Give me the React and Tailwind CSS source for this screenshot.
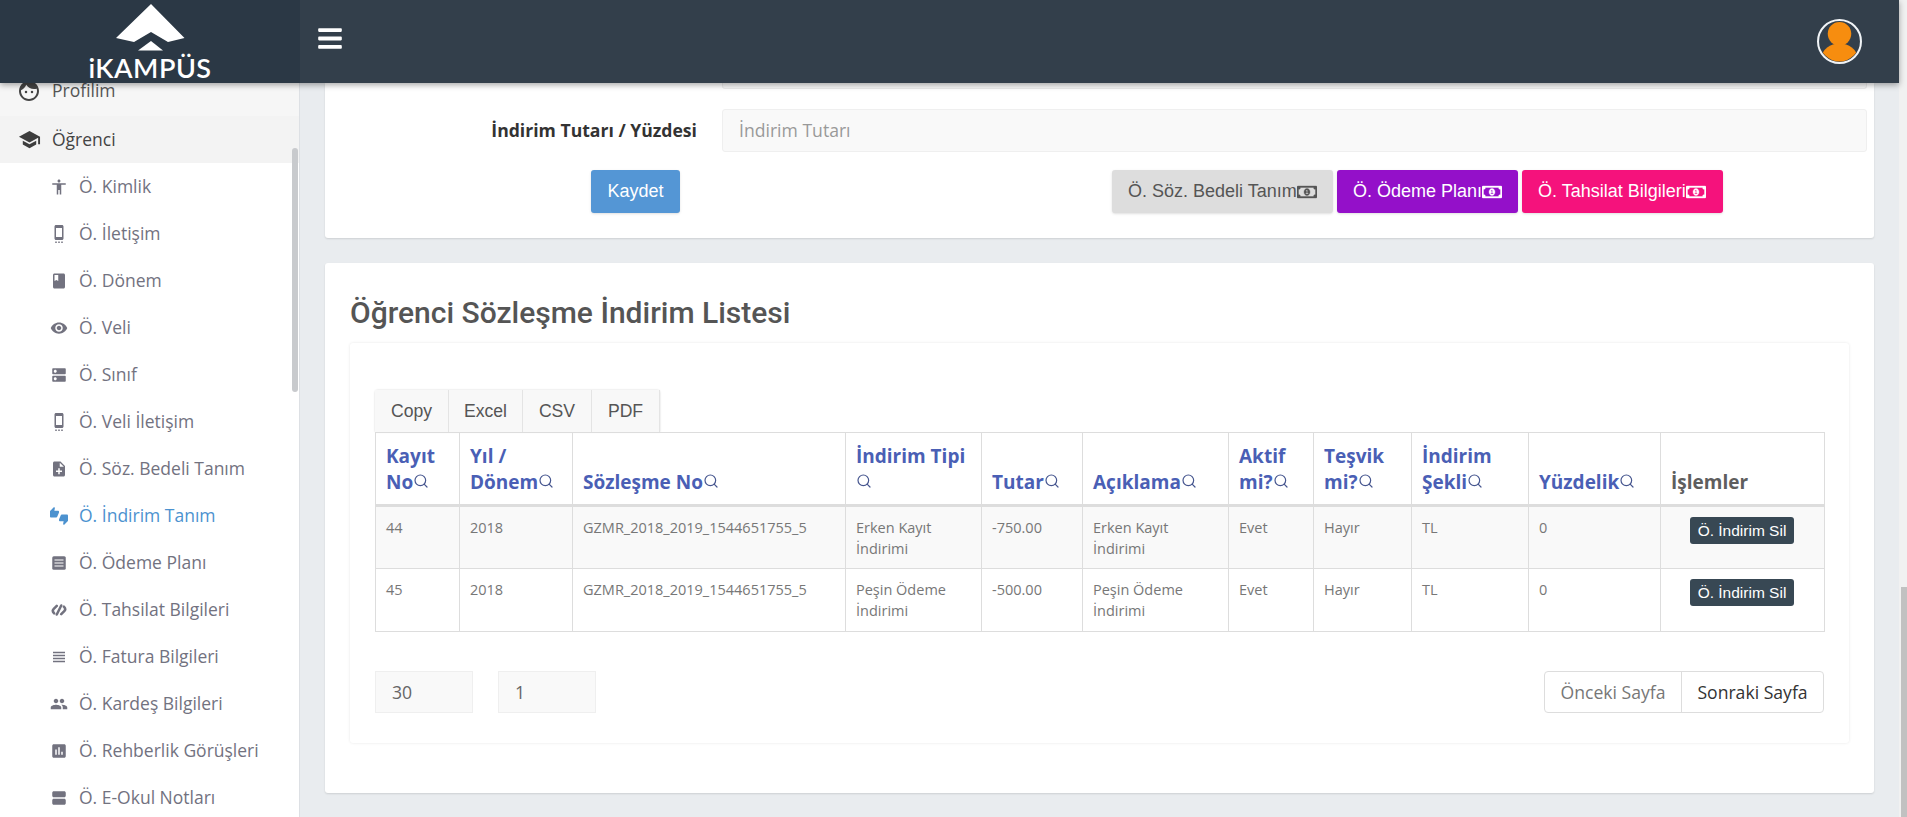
import React from "react";
import { FaBars, FaRegMoneyBillAlt } from "react-icons/fa";
import { Search } from "lucide-react";
import {
  MdAccessibility,
  MdSettingsCell,
  MdBook,
  MdRemoveRedEye,
  MdDns,
  MdNoteAdd,
  MdThumbsUpDown,
  MdViewHeadline,
  MdPeople,
  MdAssessment,
  MdViewAgenda,
  MdFace,
  MdSchool,
} from "react-icons/md";

const TahsilatIcon = ({ className }) => (
  <svg viewBox="0 0 24 24" className={className} fill="none" stroke="currentColor" strokeWidth={3.4} strokeLinecap="round">
    <path d="M9 6.5 5 10.5c-2 2-1.5 4 .5 6" />
    <path d="M15 17.5l4-4c2-2 1.5-4-.5-6" />
    <path d="M15 6 9 18" />
  </svg>
);

const PlanIcon = ({ className }) => (
  <svg viewBox="0 0 24 24" className={className}>
    <rect x="3" y="3" width="18" height="18" rx="2" fill="currentColor" />
    <path d="M6 8h12M6 12h12M6 16h12" stroke="#fff" strokeWidth="1.6" />
  </svg>
);

const menu = [
  { label: "Ö. Kimlik", icon: MdAccessibility },
  { label: "Ö. İletişim", icon: MdSettingsCell },
  { label: "Ö. Dönem", icon: MdBook },
  { label: "Ö. Veli", icon: MdRemoveRedEye },
  { label: "Ö. Sınıf", icon: MdDns },
  { label: "Ö. Veli İletişim", icon: MdSettingsCell },
  { label: "Ö. Söz. Bedeli Tanım", icon: MdNoteAdd },
  { label: "Ö. İndirim Tanım", icon: MdThumbsUpDown, active: true },
  { label: "Ö. Ödeme Planı", icon: PlanIcon },
  { label: "Ö. Tahsilat Bilgileri", icon: TahsilatIcon },
  { label: "Ö. Fatura Bilgileri", icon: MdViewHeadline },
  { label: "Ö. Kardeş Bilgileri", icon: MdPeople },
  { label: "Ö. Rehberlik Görüşleri", icon: MdAssessment },
  { label: "Ö. E-Okul Notları", icon: MdViewAgenda },
];

const columns = [
  { label: "Kayıt No", width: "w-[84px]", search: true },
  { label: "Yıl / Dönem", width: "w-[113px]", search: true },
  { label: "Sözleşme No", width: "w-[273px]", search: true },
  { label: "İndirim Tipi", width: "w-[136px]", search: true },
  { label: "Tutar", width: "w-[101px]", search: true },
  { label: "Açıklama", width: "w-[146px]", search: true },
  { label: "Aktif mi?", width: "w-[85px]", search: true },
  { label: "Teşvik mi?", width: "w-[98px]", search: true },
  { label: "İndirim Şekli", width: "w-[117px]", search: true },
  { label: "Yüzdelik", width: "w-[132px]", search: true },
  { label: "İşlemler", width: "w-[164px]" },
];

const rows = [
  ["44", "2018", "GZMR_2018_2019_1544651755_5", "Erken Kayıt İndirimi", "-750.00", "Erken Kayıt İndirimi", "Evet", "Hayır", "TL", "0"],
  ["45", "2018", "GZMR_2018_2019_1544651755_5", "Peşin Ödeme İndirimi", "-500.00", "Peşin Ödeme İndirimi", "Evet", "Hayır", "TL", "0"],
];

const Header = () => (
  <header className="relative z-10 flex h-[83px] shrink-0 bg-[#333f4b] shadow-[0_2px_6px_rgba(0,0,0,0.35)]">
    <div className="flex w-[300px] shrink-0 flex-col items-center bg-[#2b3845]">
      <svg viewBox="0 0 300 52" className="h-[52px] w-[300px]" fill="#fff">
        <polygon points="151,4 184.5,38 168,42 151,32 134,42 116,38" />
        <polygon points="138,50.5 151,41 163,50.5" />
      </svg>
      <span className="mt-[1px] font-['Lato',sans-serif] text-[27px] leading-[30px] font-semibold tracking-[0.5px] text-white">iKAMPÜS</span>
    </div>
    <div className="flex flex-1 items-center justify-between pr-[37px] pl-[18px]">
      <FaBars className="-mt-[6px] h-[27px] w-[24px] text-white" />
      <svg viewBox="0 0 44 44" className="h-[45px] w-[45px]">
        <circle cx="22" cy="22" r="21" fill="#333f4b" stroke="#f1f4f7" strokeWidth="2" />
        <clipPath id="avatar-clip">
          <circle cx="22" cy="22" r="19.5" />
        </clipPath>
        <g clipPath="url(#avatar-clip)" fill="#f78d0f">
          <circle cx="22" cy="14.5" r="11.5" />
          <ellipse cx="22" cy="37" rx="17" ry="13" />
        </g>
      </svg>
    </div>
  </header>
);

const Sidebar = () => (
  <aside className="relative w-[300px] shrink-0 overflow-hidden border-r border-[#dde0e4] bg-white font-['Open_Sans',sans-serif] text-[17.5px]">
    <div className="-mt-[14px]">
      <div className="flex h-[47px] items-center bg-[#f6f6f6] pb-[4px] pl-[17px] text-[#555]">
        <MdFace className="h-[24px] w-[24px] text-[#444]" />
        <span className="ml-[11px]">Profilim</span>
      </div>
      <div className="flex h-[47px] items-center bg-[#f3f3f3] pl-[18px] text-[#444]">
        <MdSchool className="h-[23px] w-[23px] text-[#3d3d3d]" />
        <span className="ml-[11px]">Öğrenci</span>
      </div>
      {menu.map((item) => (
        <div
          key={item.label}
          className={`flex h-[47px] items-center pl-[50px] ${item.active ? "text-[#4c92cf]" : "text-[#72727f]"}`}
        >
          <item.icon className="h-[18px] w-[18px]" />
          <span className="ml-[11px] whitespace-nowrap">{item.label}</span>
        </div>
      ))}
    </div>
    <div className="absolute top-[65px] right-[1px] h-[244px] w-[6px] rounded-full bg-[#c8cacd]" />
  </aside>
);

const ColorButton = ({ label, className }) => (
  <button className={`flex h-[43px] items-center rounded-[3px] pl-[16px] shadow-sm ${className}`}>
    {label}
    <FaRegMoneyBillAlt strokeWidth={12} className="h-[20px] w-[20px]" />
  </button>
);

const FormCard = () => (
  <section className="h-[155px] shrink-0 rounded-b-[3px] bg-white shadow-[0_1px_2px_rgba(0,0,0,0.12)]">
    <div className="ml-[397px] mr-[7px] h-[6px] rounded-b-[3px] border-x border-b border-[#ececec] bg-[#f9f9f9]" />
    <div className="mt-[20px] flex h-[43px] items-center">
      <label className="w-[372px] text-right font-['Open_Sans',sans-serif] text-[17.6px] font-bold text-[#333]">İndirim Tutarı / Yüzdesi</label>
      <div className="ml-[25px] mr-[7px] flex h-[43px] flex-1 items-center rounded-[3px] border border-[#efefef] bg-[#f9f9f9] pl-[16px] font-['Open_Sans',sans-serif] text-[17.6px] text-[#999]">
        İndirim Tutarı
      </div>
    </div>
    <div className="mt-[18px] flex items-center font-['Liberation_Sans',sans-serif] text-[18px]">
      <button className="ml-[266px] h-[43px] w-[89px] rounded-[3px] bg-[#5496d5] text-white shadow-sm">Kaydet</button>
      <div className="ml-[432px] flex gap-[4px]">
        <ColorButton label="Ö. Söz. Bedeli Tanım" className="w-[221px] bg-[#dddddd] text-[#555]" />
        <ColorButton label="Ö. Ödeme Planı" className="w-[181px] bg-[#9410c9] text-white" />
        <ColorButton label="Ö. Tahsilat Bilgileri" className="w-[201px] bg-[#f5127c] text-white" />
      </div>
    </div>
  </section>
);

const ListTable = () => (
  <table className="w-[1449px] table-fixed border-collapse border border-[#dddddd] font-['Open_Sans',sans-serif]">
    <thead>
      <tr className="h-[73px]">
        {columns.map((col) => (
          <th
            key={col.label}
            className={`${col.width} border border-b-[3px] border-[#dddddd] px-[10px] pb-[9px] text-left align-bottom text-[19px] leading-[26px] font-bold ${col.search ? "text-[#4a5fb5]" : "text-[#5e5e5e]"}`}
          >
            {col.label}
            {col.search && <Search strokeWidth={1.8} className="inline h-[16px] w-[16px] align-[0px] text-[#46568f]" />}
          </th>
        ))}
      </tr>
    </thead>
    <tbody>
      {rows.map((row, i) => (
        <tr key={row[0]} className={`h-[63px] ${i === 0 ? "bg-[#f9f9f9]" : "bg-white"}`}>
          {row.map((cell, j) => (
            <td key={j} className="border border-[#dddddd] px-[10px] pt-[10px] align-top text-[14.5px] leading-[21px] text-[#777]">
              {cell}
            </td>
          ))}
          <td className="border border-[#dddddd] pt-[10px] pr-[30px] text-right align-top">
            <button className="inline-block h-[27px] w-[104px] rounded-[3px] bg-[#384854] font-['Liberation_Sans',sans-serif] text-[15.5px] whitespace-nowrap text-white">
              Ö. İndirim Sil
            </button>
          </td>
        </tr>
      ))}
    </tbody>
  </table>
);

const ListCard = () => (
  <section className="mt-[25px] h-[530px] shrink-0 rounded-[3px] bg-white px-[25px] pt-[29px] shadow-[0_1px_2px_rgba(0,0,0,0.12)]">
    <h2 className="font-['Roboto',sans-serif] text-[30px] leading-[42px] font-medium text-[#555]">Öğrenci Sözleşme İndirim Listesi</h2>
    <div className="mt-[9px] h-[400px] rounded-[3px] bg-white px-[25px] pt-[47px] shadow-[0_0_3px_rgba(0,0,0,0.1)]">
      <div className="flex h-[42px] w-fit rounded-t-[3px] font-['Liberation_Sans',sans-serif] text-[17.6px] text-[#555] shadow-[0_0_2px_rgba(0,0,0,0.2)]">
        {["Copy", "Excel", "CSV", "PDF"].map((b, i) => (
          <button
            key={b}
            className={`h-full border-r border-[#e4e4e4] bg-[#f8f8f8] ${["w-[74px]", "w-[74px]", "w-[69px]", "w-[68px]"][i]}`}
          >
            {b}
          </button>
        ))}
      </div>
      <ListTable />
      <div className="mt-[39px] flex items-center justify-between font-['Open_Sans',sans-serif] text-[17.6px]">
        <div className="flex gap-[25px]">
          <div className="flex h-[42px] w-[98px] items-center border border-[#efefef] bg-[#f9f9f9] pl-[16px] text-[#666]">30</div>
          <div className="flex h-[42px] w-[98px] items-center border border-[#efefef] bg-[#f9f9f9] pl-[16px] text-[#666]">1</div>
        </div>
        <div className="flex h-[42px] rounded-[4px] border border-[#dddddd]">
          <button className="w-[137px] border-r border-[#dddddd] text-[#777]">Önceki Sayfa</button>
          <button className="w-[141px] text-[#333]">Sonraki Sayfa</button>
        </div>
      </div>
    </div>
  </section>
);

export default function App() {
  return (
    <div className="flex h-[817px] w-[1907px] overflow-hidden bg-[#f1f1f1]">
      <div className="flex w-[1899px] flex-col">
        <Header />
        <div className="flex min-h-0 flex-1">
          <Sidebar />
          <main className="flex flex-1 flex-col overflow-hidden bg-[#e9ecef] px-[25px]">
            <FormCard />
            <ListCard />
          </main>
        </div>
      </div>
      <div className="flex w-[8px] flex-col justify-end pl-[2px]">
        <div className="h-[230px] bg-[#c1c1c1]" />
      </div>
    </div>
  );
}
